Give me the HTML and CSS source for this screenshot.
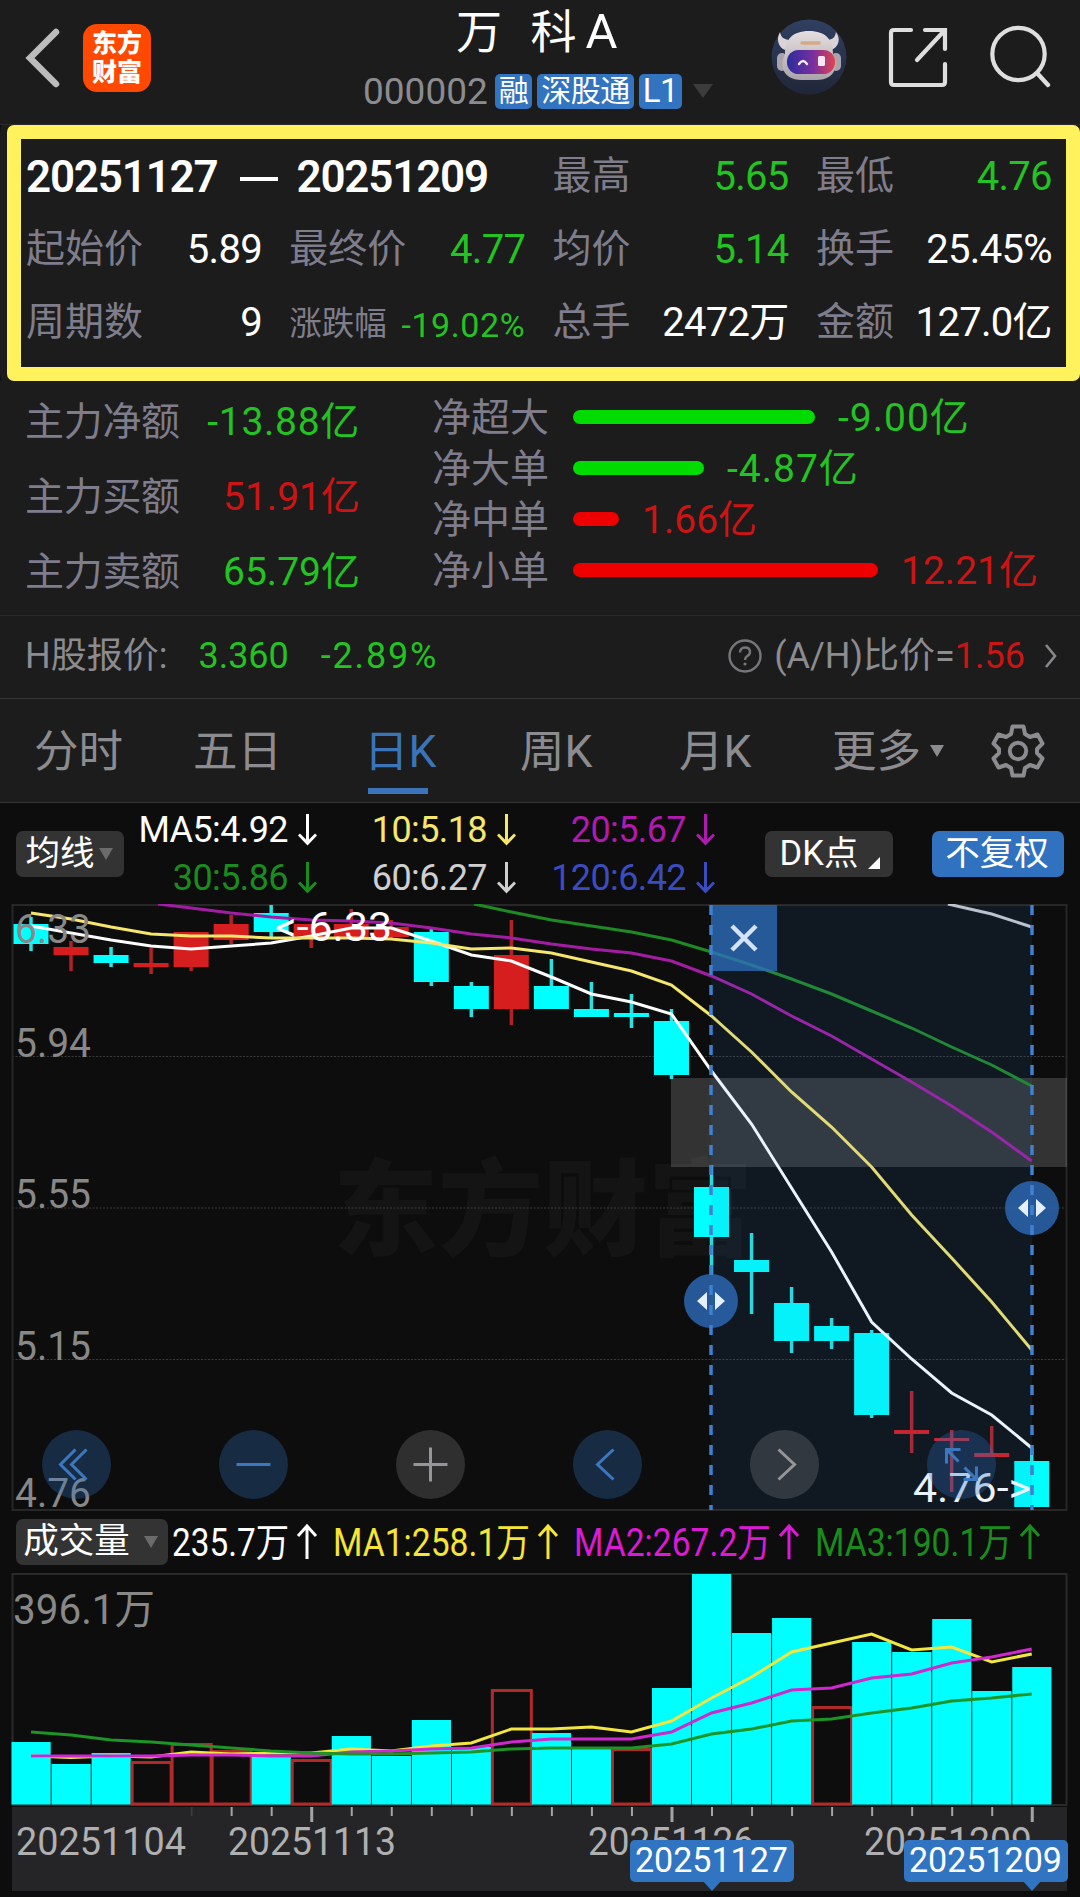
FILE: index.html
```
<!DOCTYPE html>
<html lang="zh-CN">
<head>
  <meta charset="UTF-8">
  <meta name="viewport" content="width=device-width, initial-scale=1.0">
  <title>万科A 000002</title>
  <link rel="stylesheet" href="styles.css">
</head>
<body>
  <header class="top-bar">
    <div class="top-left">
      <svg class="back" width="36" height="62" viewBox="0 0 36 62"><path d="M32 5L6 31L32 57" fill="none" stroke="#bcbcbc" stroke-width="6.5" stroke-linecap="round"/></svg>
      <div class="logo"><span>东方</span><span>财富</span></div>
    </div>
    <div class="stock">
      <h1>万 科<span>A</span></h1>
      <div class="stock-sub">
        <span class="code">000002</span>
        <span class="badge">融</span>
        <span class="badge">深股通</span>
        <span class="badge">L1</span>
        <i class="tri tri-dark"></i>
      </div>
    </div>
    <div class="top-icons">
      <svg width="76" height="76" viewBox="0 0 76 76">
        <defs>
          <linearGradient id="visor" x1="0" x2="1"><stop offset="0" stop-color="#2b2c9c"/><stop offset=".55" stop-color="#7a2fa0"/><stop offset="1" stop-color="#e0444f"/></linearGradient>
          <linearGradient id="disc" x1="0" x2="0" y1="0" y2="1"><stop offset="0" stop-color="#304062"/><stop offset="1" stop-color="#202638"/></linearGradient>
          <linearGradient id="shell" x1="0" x2="0" y1="0" y2="1"><stop offset="0" stop-color="#e4dfe0"/><stop offset="1" stop-color="#aba3aa"/></linearGradient>
        </defs>
        <circle cx="38" cy="38" r="37.5" fill="url(#disc)"/>
        <path d="M14 31C7 28 5 20 9 13C10 19 14 21 20 21ZM60 31C68 28 70 20 65 13C64 19 61 21 55 21Z" fill="#d9d4d8"/>
        <rect x="6" y="34" width="10" height="18" rx="5" fill="#a9a3ab"/>
        <rect x="60" y="34" width="10" height="18" rx="5" fill="#a9a3ab"/>
        <path d="M38 12C55 12 62 21 62 35C65 42 66 48 62 54C57 61 49 61 38 61C27 61 19 61 14 54C10 48 11 42 14 35C14 21 21 12 38 12Z" fill="url(#shell)"/>
        <path d="M31 24H48" stroke="#d3a986" stroke-width="3.5" fill="none" stroke-linecap="round"/>
        <rect x="16" y="31" width="48" height="24" rx="11.5" fill="url(#visor)"/>
        <path d="M28 45Q32 39 36 45" stroke="#f4ecff" stroke-width="2.4" fill="none" stroke-linecap="round"/>
        <rect x="47" y="37" width="7" height="10" rx="1.5" fill="#f6e8f2"/>
      </svg>
      <svg width="60" height="62" viewBox="0 0 60 62"><path d="M23 4H6Q3 4 3 7V56Q3 59 6 59H54Q57 59 57 56V38M37 4H57V23M56 5L29 34" fill="none" stroke="#dedede" stroke-width="4.2" stroke-linecap="round"/></svg>
      <svg width="62" height="64" viewBox="0 0 62 64"><circle cx="29.5" cy="29" r="26.2" fill="none" stroke="#dedede" stroke-width="4.2"/><path d="M48 48L59 60" stroke="#dedede" stroke-width="4.4" stroke-linecap="round"/></svg>
    </div>
  </header>

  <section class="range-box">
    <div class="cell wide"><b>20251127</b><i class="dash"></i><b>20251209</b></div>
    <div class="cell"><span>最高</span><em class="green">5.65</em></div>
    <div class="cell"><span>最低</span><em class="green">4.76</em></div>
    <div class="cell"><span>起始价</span><em>5.89</em></div>
    <div class="cell"><span>最终价</span><em class="green">4.77</em></div>
    <div class="cell"><span>均价</span><em class="green">5.14</em></div>
    <div class="cell"><span>换手</span><em>25.45%</em></div>
    <div class="cell"><span>周期数</span><em>9</em></div>
    <div class="cell small"><span>涨跌幅</span><em class="green">-19.02%</em></div>
    <div class="cell"><span>总手</span><em>2472万</em></div>
    <div class="cell"><span>金额</span><em>127.0亿</em></div>
  </section>

  <section class="funds">
    <div class="funds-main">
      <div class="fund"><span>主力净额</span><em class="green minus">-13.88亿</em></div>
      <div class="fund"><span>主力买额</span><em class="red">51.91亿</em></div>
      <div class="fund"><span>主力卖额</span><em class="green">65.79亿</em></div>
    </div>
    <div class="funds-net">
      <div class="net"><span>净超大</span><i class="bar bar-green" style="width:242px"></i><em class="green minus">-9.00亿</em></div>
      <div class="net"><span>净大单</span><i class="bar bar-green" style="width:131px"></i><em class="green minus">-4.87亿</em></div>
      <div class="net"><span>净中单</span><i class="bar bar-red" style="width:46px"></i><em class="red">1.66亿</em></div>
      <div class="net"><span>净小单</span><i class="bar bar-red" style="width:305px"></i><em class="red">12.21亿</em></div>
    </div>
  </section>

  <section class="h-share">
    <span>H股报价:</span>
    <em class="green h-price">3.360</em>
    <em class="green h-change">-2.89%</em>
    <div class="ratio">
      <svg width="36" height="36" viewBox="0 0 36 36"><circle cx="18" cy="18" r="15.5" fill="none" stroke="#77777b" stroke-width="2.4"/><path d="M13 14.5Q13 9.5 18 9.5Q23 9.5 23 14Q23 16.5 20 18.3Q18 19.6 18 22" fill="none" stroke="#77777b" stroke-width="2.4"/><circle cx="18" cy="26" r="1.6" fill="#77777b"/></svg>
      <span>(A/H)比价=</span><em class="red">1.56</em>
      <svg class="more" width="14" height="26" viewBox="0 0 14 26"><path d="M2 2L11 13L2 24" fill="none" stroke="#88888c" stroke-width="2.6"/></svg>
    </div>
  </section>

  <nav class="tabs">
    <a>分时</a>
    <a>五日</a>
    <a class="active">日K</a>
    <a>周K</a>
    <a>月K</a>
    <a>更多<i class="tri tri-tab"></i></a>
    <svg class="gear" width="54" height="54" viewBox="0 0 54 54"><path d="M21.5 2.5H32.5L34 10L39 13L46.500 10.500L51.500 19.500L46 25V29L51.500 34.500L46.500 43.500L39 41L34 44L32.500 51.500H21.500L20 44L15 41L7.500 43.500L2.500 34.500L8 29V25L2.500 19.500L7.500 10.500L15 13L20 10Z" fill="none" stroke="#8c8c90" stroke-width="4" stroke-linejoin="round"/><circle cx="27" cy="27" r="8.200" fill="none" stroke="#8c8c90" stroke-width="4"/></svg>
  </nav>

  <section class="ma-bar">
    <div class="chip chip-ma">均线<i class="tri tri-chip"></i></div>
    <div class="ma-list">
      <span class="ma5">MA5:4.92</span><span class="ma10">10:5.18</span><span class="ma20">20:5.67</span>
      <span class="ma30">30:5.86</span><span class="ma60">60:6.27</span><span class="ma120">120:6.42</span>
    </div>
    <div class="chip chip-dk">DK点<i class="corner"></i></div>
    <div class="chip chip-blue">不复权</div>
  </section>

  <svg class="kline" id="kline" width="1080" height="607" viewBox="0 904 1080 607">
    <text x="333" y="1247" class="watermark" textLength="420">东方财富</text>
    <path d="M12 1056.500H1067M12 1208H1067M12 1359.500H1067" stroke="#3a3a3a" stroke-dasharray="2 1.500"/>
    <path d="M12.500 905H1066.500V1510H12.500Z" fill="none" stroke="#272727" stroke-width="2"/>
    <rect x="671" y="1078" width="396" height="89" fill="#fff" fill-opacity=".16"/>
    <g id="candles"></g>
    <g id="averages"></g>
    <g class="axis-label">
      <text x="15" y="943" textLength="76" lengthAdjust="spacingAndGlyphs">6.33</text>
      <text x="15" y="1057" textLength="76" lengthAdjust="spacingAndGlyphs">5.94</text>
      <text x="15" y="1208" textLength="76" lengthAdjust="spacingAndGlyphs">5.55</text>
      <text x="15" y="1360" textLength="76" lengthAdjust="spacingAndGlyphs">5.15</text>
      <text x="15" y="1507" textLength="76" lengthAdjust="spacingAndGlyphs">4.76</text>
    </g>
    <g class="peak">
      <text x="275" y="941" textLength="117" lengthAdjust="spacingAndGlyphs">&lt;-6.33</text>
      <text x="913" y="1502" textLength="118" lengthAdjust="spacingAndGlyphs">4.76-&gt;</text>
    </g>
    <rect x="711" y="905" width="321" height="605" fill="#3582dc" fill-opacity=".1"/>
    <rect x="711" y="905" width="66" height="66" fill="#2e6fc0" fill-opacity=".75"/>
    <path d="M732 926L756 950M756 926L732 950" stroke="#d3e2f6" stroke-width="4.500"/>
    <g id="tools"></g>
    <g fill="#2b66b0" fill-opacity=".85"><circle cx="711" cy="1301" r="27"/><circle cx="1032" cy="1208" r="27"/></g>
    <path d="M711 905V1510M1032 905V1510" stroke="#3f80d0" stroke-width="3.500" stroke-dasharray="10 10"/>
    <path d="M697 1301L707 1292V1310ZM725 1301L715 1292V1310ZM1018 1208L1028 1199V1217ZM1046 1208L1036 1199V1217Z" fill="#e4f0ff"/>
  </svg>

  <section class="vol-bar">
    <div class="chip chip-vol">成交量<i class="tri tri-chip"></i></div>
    <svg width="900" height="62" viewBox="168 1511 900 62">
      <g class="vol-text">
        <text x="172" y="1556" textLength="117" lengthAdjust="spacingAndGlyphs" fill="#fff">235.7万</text>
        <text x="333" y="1556" textLength="197" lengthAdjust="spacingAndGlyphs" fill="#f5e534">MA1:258.1万</text>
        <text x="574" y="1556" textLength="197" lengthAdjust="spacingAndGlyphs" fill="#dc1ad6">MA2:267.2万</text>
        <text x="815" y="1556" textLength="197" lengthAdjust="spacingAndGlyphs" fill="#1a8c1e">MA3:190.1万</text>
      </g>
      <g fill="none" stroke-width="3">
        <path d="M307 1559V1526M298 1536L307 1526L316 1536" stroke="#fff"/>
        <path d="M548 1559V1526M539 1536L548 1526L557 1536" stroke="#f5e534"/>
        <path d="M789 1559V1526M780 1536L789 1526L798 1536" stroke="#dc1ad6"/>
        <path d="M1030 1559V1526M1021 1536L1030 1526L1039 1536" stroke="#1a8c1e"/>
      </g>
    </svg>
  </section>

  <svg class="volume" id="volume" width="1080" height="324" viewBox="0 1573 1080 324">
    <path d="M12.500 1574H1066.500V1805H12.500Z" fill="none" stroke="#2a2a2a" stroke-width="2"/>
    <text x="13" y="1624" class="vol-max" textLength="142" lengthAdjust="spacingAndGlyphs">396.1万</text>
    <g id="bars"></g>
    <g id="volAverages"></g>
    <rect x="12" y="1807" width="1055" height="84" fill="#252527"/>
    <g id="ticks"></g>
    <g class="date">
      <text x="16" y="1855" textLength="170" lengthAdjust="spacingAndGlyphs">20251104</text>
      <text x="228" y="1855" textLength="168" lengthAdjust="spacingAndGlyphs">20251113</text>
      <text x="588" y="1855" textLength="166" lengthAdjust="spacingAndGlyphs">20251126</text>
      <text x="864" y="1855" textLength="168" lengthAdjust="spacingAndGlyphs">20251209</text>
    </g>
    <g fill="#3174c1">
      <rect x="630" y="1840" width="164" height="42" rx="5"/><path d="M703 1881H721L712 1891Z"/>
      <rect x="904" y="1840" width="164" height="42" rx="5"/><path d="M1023 1881H1041L1032 1891Z"/>
    </g>
    <g class="tag">
      <text x="635" y="1872" textLength="153" lengthAdjust="spacingAndGlyphs">20251127</text>
      <text x="909" y="1872" textLength="153" lengthAdjust="spacingAndGlyphs">20251209</text>
    </g>
  </svg>
  <script src="chart.js"></script>
</body>
</html>
```

FILE: styles.css
```
* {
  box-sizing: border-box;
}

body {
  margin: 0;
  width: 1080px;
  height: 1897px;
  overflow: hidden;
  background: #0d0d0d;
  color: #fff;
  font-family: Roboto, "Noto Sans CJK SC", sans-serif;
  font-size: 39px;
  line-height: 1;
}

em, i {
  font-style: normal;
}

svg {
  display: block;
  flex: none;
}

.green { color: #22c322; }
.red { color: #cc1414; }

.tri {
  display: inline-block;
  border-style: solid;
  border-color: transparent;
  border-bottom-width: 0;
}

.tri-dark {
  border-width: 14px 10.5px 0;
  border-top-color: #3c3c3c;
  margin-left: 6px;
}

/* header */
.top-bar {
  height: 125px;
  padding: 0 29px 0 24px;
  background: #1c1c1c;
  border-bottom: 1px solid #2b2b2b;
  display: grid;
  grid-template-columns: 340px 1fr 280px;
}

.top-left {
  display: flex;
  align-items: center;
  height: 115px;
}

.logo {
  width: 68px;
  height: 68px;
  margin-left: 23px;
  border-radius: 14px;
  background: #ff4800;
  display: flex;
  flex-direction: column;
  align-items: center;
  justify-content: center;
  font-size: 25px;
  font-weight: 900;
  line-height: 29px;
}

.stock h1 {
  margin: 0;
  padding: 4px 0 2px 92px;
  font-size: 46px;
  font-weight: 400;
  line-height: 56px;
  white-space: nowrap;
  word-spacing: 17px;
}

.stock h1 span {
  margin-left: 9px;
  font-size: 49px;
}

.stock-sub {
  display: flex;
  align-items: center;
  gap: 5px;
  height: 36px;
  margin-top: 11px;
  white-space: nowrap;
}

.code {
  color: #8c8c90;
  font-size: 37px;
  margin: 0 2px 0 -1px;
}

.badge {
  height: 35px;
  padding: 0 4px;
  border-radius: 5px;
  background: #3374c0;
  font-size: 30px;
  line-height: 34px;
  letter-spacing: -.5px;
}

.badge:nth-of-type(4) {
  font-size: 33px;
}

.top-icons {
  display: flex;
  align-items: center;
  justify-content: space-between;
  height: 114px;
}

/* selected range */
.range-box {
  width: 1073px;
  height: 256px;
  margin-left: 7px;
  padding: 1px 12px 0 5px;
  border: 14px solid #fff25c;
  border-radius: 7px;
  background: #1c1c1c;
  box-shadow: 0 0 0 7px #1c1c1c;
  clip-path: inset(0 0 0 -7px);
  display: grid;
  grid-template-columns: repeat(4, 236px);
  grid-template-rows: repeat(3, 73px);
  column-gap: 27.300px;
}

.cell {
  display: flex;
  align-items: center;
  justify-content: space-between;
  white-space: nowrap;
}

.cell span {
  color: #7f7d8c;
}

.cell em {
  font-size: 40px;
  letter-spacing: -.7px;
}

.cell.wide {
  grid-column: span 2;
  justify-content: flex-start;
}

.cell b {
  font-size: 44px;
  font-weight: 600;
  letter-spacing: -1.200px;
}

.dash {
  width: 38px;
  height: 4px;
  margin: 4px 19px 0 22px;
  background: #fff;
}

.cell.small {
  padding-top: 4px;
}

.cell.small span {
  font-size: 32.500px;
}

.cell.small em {
  font-size: 34px;
  letter-spacing: .6px;
}

/* money flow */
.funds {
  height: 235px;
  background: #1c1c1c;
  border-bottom: 1px solid #2a2a2a;
  display: flex;
}

.funds-main {
  width: 360px;
  padding: 4px 0 0 25px;
}

.fund {
  height: 75px;
  display: flex;
  align-items: center;
  justify-content: space-between;
}

.fund span, .net span {
  color: #7f7d8c;
}

.minus {
  letter-spacing: 1px;
}

.fund span {
  letter-spacing: -.3px;
}

.fund .minus {
  letter-spacing: .7px;
}

.funds-net {
  padding: 11px 0 0 72px;
}

.net {
  height: 51px;
  display: flex;
  align-items: center;
}

.net span, .net em {
  padding-top: 2px;
}

.bar {
  height: 14px;
  border-radius: 7px;
  margin: 0 23px 1px 24px;
}

.bar-green { background: #00dc00; }
.bar-red { background: #ee0000; }

/* h share */
.h-share {
  height: 83px;
  padding: 0 22px 3px 25px;
  background: #1c1c1c;
  border-bottom: 1px solid #333;
  display: flex;
  align-items: center;
  font-size: 36px;
  color: #8c8c90;
}

.h-price { margin-left: 31px; }

.h-change {
  margin-left: 32px;
  letter-spacing: 1.8px;
}

.ratio {
  margin-left: auto;
  display: flex;
  align-items: center;
}

.ratio span {
  margin-left: 11px;
}

.more {
  margin-left: 19px;
}

/* period tabs */
.tabs {
  height: 104px;
  padding: 0 35px 0 34px;
  background: #1c1c1c;
  border-bottom: 1px solid #333;
  display: grid;
  grid-template-columns: 159px 171px 156px 159px 153px 1fr 54px;
  font-size: 44.500px;
  color: #8c8c90;
}

.tabs a {
  display: flex;
  align-items: center;
  height: 96px;
  padding-top: 10px;
}

.tabs .active {
  color: #3b74b8;
  background: linear-gradient(#3b74b8, #3b74b8) 4px 89px / 60px 6px no-repeat;
}

.tri-tab {
  border-width: 12px 7.500px 0;
  border-top-color: #8c8c90;
  margin: 0 0 2px 9px;
}

.gear {
  margin-top: 25px;
}

/* moving averages */
.ma-bar {
  height: 101px;
  padding: 0 16px;
  display: flex;
  align-items: center;
}

.chip {
  height: 46px;
  border-radius: 7px;
  background: #333;
  font-size: 34.500px;
  display: flex;
  align-items: center;
  justify-content: center;
  white-space: nowrap;
}

.chip-ma {
  width: 108px;
  padding-right: 2px;
}

.tri-chip {
  border-width: 12px 7.500px 0;
  border-top-color: #6b6b6b;
  margin-left: 4px;
}

.ma-list {
  width: 592px;
  display: grid;
  grid-template-columns: 193px 199px 199px;
  grid-template-rows: 48px 48px;
  align-items: center;
  font-size: 36px;
  letter-spacing: -.6px;
}

.ma-list span {
  display: flex;
  align-items: center;
  justify-content: flex-end;
}

/* down arrow after each value */
.ma-list span::after {
  content: "";
  width: 19px;
  height: 32px;
  margin-left: 10px;
  background: currentColor;
  clip-path: polygon(8px 0, 11px 0, 11px 26px, 17px 20px, 19px 22px, 9.500px 32px, 0 22px, 2px 20px, 8px 26px);
}

.ma5 { color: #fff; }
.ma10 { color: #f5e66c; }
.ma20 { color: #b01ab0; }
.ma30 { color: #1a8c1e; }
.ma60 { color: #cfcfcf; }
.ma120 { color: #3b4cc0; }

.chip-dk {
  width: 128px;
  margin-left: 49px;
  padding-left: 2px;
}

.corner {
  border-style: solid;
  border-width: 0 0 12px 12px;
  border-color: transparent transparent #fff;
  margin: 18px 0 0 10px;
}

.chip-blue {
  width: 132px;
  margin-left: auto;
  padding-right: 2px;
  background: #3072c0;
}

/* charts */
.kline {
  overflow: hidden;
}

.axis-label {
  font-size: 41px;
  fill: #888;
}

.peak {
  font-size: 40px;
  fill: #fff;
}

.watermark {
  font-size: 105px;
  font-weight: 900;
  fill: #141414;
}

.vol-bar {
  height: 62px;
  padding-left: 16px;
  display: flex;
  align-items: center;
}

.chip-vol {
  width: 152px;
  padding-right: 3px;
  font-size: 35.500px;
}

.chip-vol .tri-chip {
  margin-left: 14px;
}

.vol-text {
  font-size: 39px;
}

.vol-max {
  font-size: 42px;
  fill: #888;
}

.date {
  font-size: 38px;
  fill: #b0b0b0;
}

.tag {
  font-size: 35px;
  fill: #fff;
}
```

FILE: chart.js
```
const STEP = 40.03;
const x = i => 31 + i * STEP;
const put = (id, html) => { document.getElementById(id).innerHTML = html; };

// [up, open/close top, bottom, high, low]
const candles = [
  [0, 924, 944, 917, 951], [1, 947, 955, 941, 971], [0, 955, 963, 947, 967],
  [1, 963, 967, 948, 974], [1, 932, 967, 932, 971], [1, 924, 940, 915, 944],
  [0, 913, 932, 905, 938], [1, 924, 937, 924, 948], [1, 924, 937, 909, 938],
  [1, 927, 937, 920, 940], [0, 932, 982, 929, 986], [0, 986, 1009, 982, 1017],
  [1, 955, 1009, 920, 1025], [0, 986, 1009, 959, 1009], [0, 1009, 1017, 982, 1017],
  [0, 1013, 1017, 994, 1028], [0, 1021, 1075, 1009, 1079], [0, 1187, 1237, 1165, 1275],
  [0, 1260, 1272, 1233, 1314], [0, 1303, 1341, 1287, 1353], [0, 1326, 1341, 1318, 1349],
  [0, 1333, 1415, 1330, 1418], [1, 1430, 1434, 1391, 1453], [1, 1438, 1441, 1430, 1492],
  [1, 1453, 1457, 1426, 1455], [0, 1461, 1507, 1448, 1507]
];

put('candles', candles.map(([up, top, bottom, high, low], i) => {
  const body = up ? '#d61e1e' : '#00ffff';
  const wick = up ? '#b02226' : '#2be0e0';
  return `<path d="M${x(i)} ${high}V${low}" stroke="${wick}" stroke-width="3.5"/>` +
    `<rect x="${x(i) - 17.5}" y="${top}" width="35" height="${bottom - top}" fill="${body}"/>`;
}).join(''));

// starts at the given candle, `lead` is where the line enters the frame
const line = (ys, color, start = 0, lead = '') =>
  `<polyline points="${lead} ${ys.map((y, i) => x(i + start) + ',' + y).join(' ')}" fill="none" stroke="${color}" stroke-width="3"/>`;

put('averages',
  line([908, 913, 917, 920, 921, 923, 928, 934, 938, 944, 949, 953, 961, 976, 994, 1016, 1036, 1059, 1082, 1106, 1132, 1161], '#a31ca3', 4, '158,904') +
  line([912, 920, 926, 932, 940, 952, 965, 979, 994, 1011, 1028, 1047, 1065, 1086], '#1f8a24', 12, '474,904') +
  line([914, 927], '#c9c9cf', 24, '948,904') +
  line([926, 933, 940, 946, 949, 946, 943, 936, 928, 928, 941, 955, 961, 977, 994, 1002, 1014, 1071, 1124, 1188, 1252, 1322, 1359, 1393, 1415, 1448], '#fff') +
  line([913, 919, 927, 934, 936, 936, 938, 938, 938, 939, 943, 949, 948, 953, 962, 971, 985, 1016, 1052, 1092, 1127, 1167, 1215, 1258, 1302, 1350], '#f5e66c'));

const tools = [
  ['blue', 'M-1 -15L-16 0L-1 15M10 -15L-5 0L10 15'],
  ['blue', 'M-17 0H17'],
  ['gray', 'M-17 0H17M0 -17V17'],
  ['blue', 'M6 -15L-10 0L6 15'],
  ['gray', 'M-6 -15L10 0L-6 15'],
  ['blue', 'M-3 -3L-15 -15M-15 -1V-15H-1M3 3L15 15M15 2V15H2']
];

put('tools', tools.map(([tone, d], i) => {
  const blue = tone === 'blue';
  return `<g transform="translate(${76.5 + i * 177} 1464.500)">` +
    `<circle r="34.5" fill="${blue ? '#2e6fc0' : '#fff'}" fill-opacity="${blue ? .3 : .14}"/>` +
    `<path d="${d}" fill="none" stroke="${blue ? '#3b78c0' : '#96969a'}" stroke-width="3"/></g>`;
}).join(''));

const volumes = [
  [0, 1742], [0, 1764], [0, 1753], [1, 1762], [1, 1744], [1, 1751], [0, 1757],
  [1, 1760], [0, 1736], [0, 1756], [0, 1720], [0, 1747], [1, 1690], [0, 1733],
  [0, 1748], [1, 1749], [0, 1688], [0, 1574], [0, 1633], [0, 1618], [1, 1707],
  [0, 1642], [0, 1652], [0, 1619], [0, 1691], [0, 1667]
];

put('bars', volumes.map(([up, top], i) => up
  ? `<rect x="${x(i) - 19}" y="${top + .5}" width="39" height="${1803.5 - top}" fill="#0d0d0d" stroke="#b02a2a" stroke-width="3"/>`
  : `<rect x="${x(i) - 19.5}" y="${top}" width="39.2" height="${1804.5 - top}" fill="#00ffff"/>`
).join(''));

put('volAverages',
  line([1756, 1757.5, 1756, 1757, 1752, 1754, 1753, 1753, 1749, 1751, 1746, 1743, 1729, 1729, 1727, 1732, 1721, 1698, 1677, 1652, 1643, 1634, 1650, 1647, 1662, 1654], '#f2e640') +
  line([1756, 1756, 1756, 1756, 1755, 1755, 1756, 1756, 1752, 1751, 1749, 1748, 1742, 1739, 1739, 1739, 1732, 1713, 1703, 1690, 1688, 1678, 1674, 1663, 1657, 1649], '#cf28cf') +
  line([1732, 1735, 1740, 1742, 1745, 1748, 1751, 1753, 1754, 1754, 1753, 1752, 1749, 1748, 1748, 1748, 1744, 1734, 1729, 1721, 1719, 1713, 1708, 1701, 1698, 1694], '#1c9426'));

let ticks = '';
for (let i = 4; i < 26; i++) {
  const major = i === 7 || i === 16 || i === 25;
  ticks += `<path d="M${x(i) + .5} 1807V${major ? 1822 : 1816}" stroke="${i === 4 ? '#3a3a3a' : '#a4a4a4'}" stroke-width="${major ? 3 : 2}"/>`;
}
put('ticks', ticks);
```
